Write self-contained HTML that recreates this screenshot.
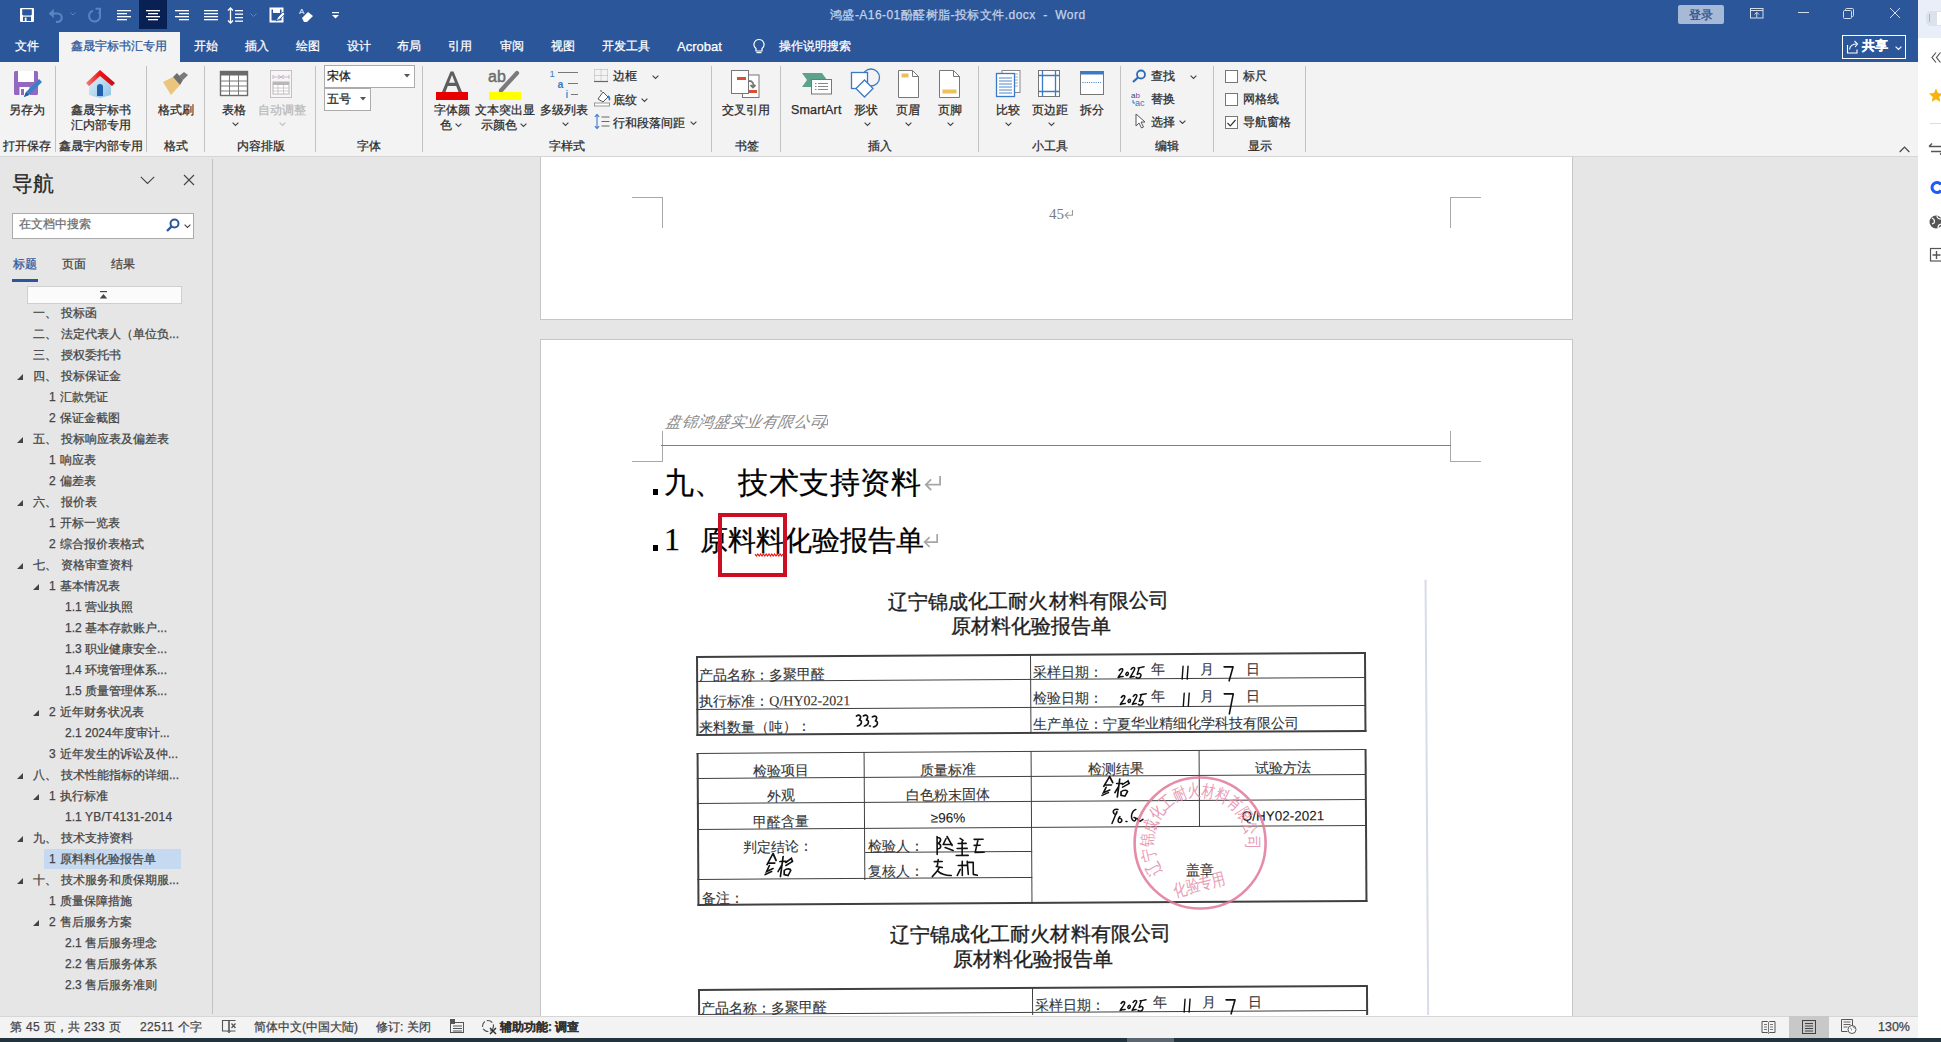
<!DOCTYPE html><html><head><meta charset="utf-8"><style>
html,body{margin:0;padding:0}
body{width:1941px;height:1042px;position:relative;overflow:hidden;background:#E6E6E6;font-family:"Liberation Sans",sans-serif}
.t{position:absolute;white-space:nowrap;-webkit-font-smoothing:antialiased;-webkit-text-stroke:0.25px currentColor}
svg{overflow:visible}
</style></head><body>
<div style="position:absolute;left:0px;top:0px;width:1918px;height:62px;background:#2B579A"></div>
<div style="position:absolute;left:1918px;top:0px;width:23px;height:1042px;background:#FFFFFF"></div>
<div style="position:absolute;left:1918px;top:0px;width:23px;height:38px;background:#E9EEF8"></div>
<svg style="position:absolute;left:19px;top:7px;" width="16" height="16" viewBox="0 0 16 16"><rect x="1" y="1" width="14" height="14" rx="1" fill="#fff"/><path d="M3.2 2.2h9.6v5.3l-1 1H4.2l-1-1z" fill="#2B579A"/><rect x="4" y="9.7" width="8" height="4.3" fill="#2B579A"/><rect x="5.8" y="10.6" width="1.7" height="3.4" fill="#fff"/></svg>
<svg style="position:absolute;left:48px;top:7px;" width="16" height="15" viewBox="0 0 16 15"><path d="M5 6.5h4.5a4.2 4.2 0 0 1 0 8.4H8" fill="none" stroke="#5A84C2" stroke-width="2.2"/><path d="M0.7 6.5L5.8 1.8v9.4z" fill="#5A84C2"/></svg>
<svg style="position:absolute;left:70px;top:12px;" width="6" height="4" viewBox="0 0 6 4"><path d="M0.5 0.5l2.5 2.5 2.5-2.5" fill="none" stroke="#5A84C2" stroke-width="1"/></svg>
<svg style="position:absolute;left:87px;top:7px;" width="15" height="15" viewBox="0 0 15 15"><path d="M6 3.6A5.6 5.6 0 1 0 11.8 5.2" fill="none" stroke="#5A84C2" stroke-width="2"/><path d="M8.5 1.8h4.5v4.6" fill="none" stroke="#5A84C2" stroke-width="2"/></svg>
<svg style="position:absolute;left:117px;top:10px;" width="15" height="12" viewBox="0 0 15 12"><rect x="0" y="0" width="14" height="1.3" fill="#fff"/><rect x="0" y="3" width="10" height="1.3" fill="#fff"/><rect x="0" y="6" width="14" height="1.3" fill="#fff"/><rect x="0" y="9" width="10" height="1.3" fill="#fff"/></svg>
<div style="position:absolute;left:139px;top:0px;width:28px;height:29px;background:#082052"></div>
<svg style="position:absolute;left:146px;top:10px;" width="15" height="12" viewBox="0 0 15 12"><rect x="0" y="0" width="14" height="1.3" fill="#fff"/><rect x="2" y="3" width="10" height="1.3" fill="#fff"/><rect x="0" y="6" width="14" height="1.3" fill="#fff"/><rect x="2" y="9" width="10" height="1.3" fill="#fff"/></svg>
<svg style="position:absolute;left:175px;top:10px;" width="15" height="12" viewBox="0 0 15 12"><rect x="0" y="0" width="14" height="1.3" fill="#fff"/><rect x="4" y="3" width="10" height="1.3" fill="#fff"/><rect x="0" y="6" width="14" height="1.3" fill="#fff"/><rect x="4" y="9" width="10" height="1.3" fill="#fff"/></svg>
<svg style="position:absolute;left:204px;top:10px;" width="15" height="12" viewBox="0 0 15 12"><rect x="0" y="0" width="14" height="1.3" fill="#fff"/><rect x="0" y="3" width="14" height="1.3" fill="#fff"/><rect x="0" y="6" width="14" height="1.3" fill="#fff"/><rect x="0" y="9" width="14" height="1.3" fill="#fff"/></svg>
<svg style="position:absolute;left:228px;top:7px;" width="16" height="17" viewBox="0 0 16 17"><path d="M2.5 1v15" stroke="#fff" stroke-width="1.3"/><path d="M0 3.5L2.5 1 5 3.5M0 13.5L2.5 16 5 13.5" fill="none" stroke="#fff" stroke-width="1.3"/><rect x="7" y="3" width="8" height="1.3" fill="#fff"/><rect x="7" y="6.5" width="8" height="1.3" fill="#fff"/><rect x="7" y="10" width="8" height="1.3" fill="#fff"/><rect x="7" y="13.5" width="8" height="1.3" fill="#fff"/></svg>
<svg style="position:absolute;left:250px;top:13px;" width="7" height="4" viewBox="0 0 7 4"><path d="M0.5 0.5l3 3 3-3" fill="none" stroke="#5A84C2" stroke-width="1"/></svg>
<svg style="position:absolute;left:269px;top:7px;" width="17" height="16" viewBox="0 0 17 16"><path d="M1.5 1.5h12v13h-12z" fill="none" stroke="#fff" stroke-width="2"/><path d="M4 1.5h7v4.5H4z" fill="#fff"/><path d="M7 14l2-4 5-5 2 2-5 5z" fill="#fff" stroke="#2B579A" stroke-width="0.8"/></svg>
<svg style="position:absolute;left:299px;top:6px;" width="16" height="17" viewBox="0 0 16 17"><text x="0" y="8" font-size="8" fill="#fff" font-family="Liberation Sans">A</text><path d="M3 12l6-6 5 4-6 6h-3z" fill="#fff"/></svg>
<svg style="position:absolute;left:332px;top:12px;" width="7" height="7" viewBox="0 0 7 7"><rect x="0" y="0" width="7" height="1.2" fill="#fff"/><path d="M0 3h7l-3.5 3.5z" fill="#fff"/></svg>
<div class="t" style="left:830px;top:9px;font-size:12px;line-height:12px;color:#C5D2E6;letter-spacing:0.45px">鸿盛-A16-01酚醛树脂-投标文件.docx&nbsp; -&nbsp; Word</div>
<div style="position:absolute;left:1678px;top:5px;width:46px;height:19px;background:#A6BAD7;border-radius:2px"></div>
<div class="t" style="left:1689px;top:9px;font-size:12px;line-height:12px;color:#2C4F88;">登录</div>
<svg style="position:absolute;left:1750px;top:8px;" width="14" height="11" viewBox="0 0 14 11"><rect x="0.5" y="0.5" width="12.5" height="9.5" fill="none" stroke="#D3DCEB" stroke-width="1"/><path d="M0.5 2.5h12.5" stroke="#D3DCEB"/><path d="M6.75 9.5V4.5M4.5 6.5l2.25-2.25L9 6.5" fill="none" stroke="#D3DCEB" stroke-width="1"/></svg>
<div style="position:absolute;left:1798px;top:12px;width:11px;height:1px;background:#D3DCEB"></div>
<svg style="position:absolute;left:1843px;top:8px;" width="11" height="11" viewBox="0 0 11 11"><rect x="0.5" y="2.5" width="8" height="8" rx="1" fill="none" stroke="#D3DCEB"/><path d="M2.5 2.5v-1a1 1 0 0 1 1-1h6a1 1 0 0 1 1 1v6a1 1 0 0 1-1 1h-1" fill="none" stroke="#D3DCEB"/></svg>
<svg style="position:absolute;left:1889px;top:7px;" width="12" height="12" viewBox="0 0 12 12"><path d="M1 1l10 10M11 1L1 11" stroke="#D3DCEB" stroke-width="1"/></svg>
<div style="position:absolute;left:59px;top:32px;width:121px;height:30px;background:#F3F3F3"></div>
<div class="t" style="left:15px;top:40px;font-size:12px;line-height:12px;color:#fff;">文件</div>
<div class="t" style="left:194px;top:40px;font-size:12px;line-height:12px;color:#fff;">开始</div>
<div class="t" style="left:245px;top:40px;font-size:12px;line-height:12px;color:#fff;">插入</div>
<div class="t" style="left:296px;top:40px;font-size:12px;line-height:12px;color:#fff;">绘图</div>
<div class="t" style="left:347px;top:40px;font-size:12px;line-height:12px;color:#fff;">设计</div>
<div class="t" style="left:397px;top:40px;font-size:12px;line-height:12px;color:#fff;">布局</div>
<div class="t" style="left:448px;top:40px;font-size:12px;line-height:12px;color:#fff;">引用</div>
<div class="t" style="left:500px;top:40px;font-size:12px;line-height:12px;color:#fff;">审阅</div>
<div class="t" style="left:551px;top:40px;font-size:12px;line-height:12px;color:#fff;">视图</div>
<div class="t" style="left:602px;top:40px;font-size:12px;line-height:12px;color:#fff;">开发工具</div>
<div class="t" style="left:71px;top:40px;font-size:12px;line-height:12px;color:#2B579A;">鑫晟宇标书汇专用</div>
<div class="t" style="left:677px;top:40px;font-size:13px;line-height:13px;color:#fff;">Acrobat</div>
<svg style="position:absolute;left:752px;top:38px;" width="14" height="17" viewBox="0 0 14 17"><path d="M7 1.5a5 5 0 0 0-3 9v2.5h6v-2.5a5 5 0 0 0-3-9z" fill="none" stroke="#fff" stroke-width="1.2"/><rect x="4.5" y="14" width="5" height="1.2" fill="#fff"/></svg>
<div class="t" style="left:779px;top:40px;font-size:12px;line-height:12px;color:#fff;">操作说明搜索</div>
<div style="position:absolute;left:1842px;top:35px;width:62px;height:22px;border:1px solid #fff"></div>
<svg style="position:absolute;left:1846px;top:40px;" width="14" height="14" viewBox="0 0 14 14"><path d="M1.5 5v8h9.5v-3.5" fill="none" stroke="#fff" stroke-width="1.1"/><path d="M3.5 9.5c0.5-3 3-5.5 7-5.5" fill="none" stroke="#fff" stroke-width="1.1"/><path d="M8.5 1L11.5 4 9 7" fill="none" stroke="#fff" stroke-width="1.1"/></svg>
<div class="t" style="left:1862px;top:39px;font-size:13px;line-height:13px;color:#fff;font-weight:bold">共享</div>
<svg style="position:absolute;left:1895px;top:46px;" width="7" height="4" viewBox="0 0 7 4"><path d="M0.6 0.6l2.9 2.9 2.9-2.9" fill="none" stroke="#fff" stroke-width="1.2"/></svg>
<div style="position:absolute;left:1926px;top:11px;width:15px;height:15px;background:#DCE2EC;border-radius:5px 0 0 5px"></div>
<div style="position:absolute;left:1937px;top:12px;width:4px;height:13px;background:#fff"></div>
<div style="position:absolute;left:1929px;top:14px;width:1px;height:8px;background:#B0B6C0"></div>
<svg style="position:absolute;left:1931px;top:52px;" width="10" height="11" viewBox="0 0 10 11"><path d="M5 0.5L1 5.5 5 10.5M9.5 0.5L5.5 5.5 9.5 10.5" fill="none" stroke="#555" stroke-width="1.2"/></svg>
<svg style="position:absolute;left:1929px;top:88px;" width="14" height="15" viewBox="0 0 14 15"><path d="M7 0.5l2 4.6 5 .5-3.8 3.3 1.1 5-4.3-2.6-4.3 2.6 1.1-5L0 5.6l5-.5z" fill="#F6B40E"/></svg>
<div style="position:absolute;left:1930px;top:123px;width:11px;height:1px;background:#DDD"></div>
<svg style="position:absolute;left:1929px;top:143px;" width="14" height="12" viewBox="0 0 14 12"><path d="M0 3.5h12M0 3.5l3-3M2 8.5h12M14 8.5l-3 3" fill="none" stroke="#555" stroke-width="1.4"/></svg>
<svg style="position:absolute;left:1930px;top:181px;" width="12" height="13" viewBox="0 0 12 13"><path d="M11 3.5A5 5 0 1 0 11 9.5" fill="none" stroke="#1A5CFF" stroke-width="3"/></svg>
<svg style="position:absolute;left:1929px;top:215px;" width="14" height="14" viewBox="0 0 14 14"><circle cx="7" cy="7" r="6.5" fill="#555"/><path d="M3 3c2 1 3 3 2 5l-2 1M8 1c0 2 2 3 4 3M9 13c0-2 1-4 4-4" fill="none" stroke="#fff" stroke-width="1.2"/></svg>
<svg style="position:absolute;left:1930px;top:248px;" width="12" height="14" viewBox="0 0 12 14"><rect x="0.5" y="0.5" width="12" height="12.5" fill="none" stroke="#555" stroke-width="1.2"/><path d="M6.5 3v8M2.5 7h8" stroke="#555" stroke-width="1.4"/></svg>
<div style="position:absolute;left:0px;top:62px;width:1918px;height:94px;background:#F3F3F3"></div>
<div style="position:absolute;left:0px;top:156px;width:1918px;height:1px;background:#D5D5D5"></div>
<div style="position:absolute;left:55px;top:66px;width:1px;height:86px;background:#C2C2C2"></div>
<div style="position:absolute;left:146px;top:66px;width:1px;height:86px;background:#C2C2C2"></div>
<div style="position:absolute;left:204px;top:66px;width:1px;height:86px;background:#C2C2C2"></div>
<div style="position:absolute;left:315px;top:66px;width:1px;height:86px;background:#C2C2C2"></div>
<div style="position:absolute;left:422px;top:66px;width:1px;height:86px;background:#C2C2C2"></div>
<div style="position:absolute;left:711px;top:66px;width:1px;height:86px;background:#C2C2C2"></div>
<div style="position:absolute;left:780px;top:66px;width:1px;height:86px;background:#C2C2C2"></div>
<div style="position:absolute;left:978px;top:66px;width:1px;height:86px;background:#C2C2C2"></div>
<div style="position:absolute;left:1120px;top:66px;width:1px;height:86px;background:#C2C2C2"></div>
<div style="position:absolute;left:1213px;top:66px;width:1px;height:86px;background:#C2C2C2"></div>
<div style="position:absolute;left:1305px;top:66px;width:1px;height:86px;background:#C2C2C2"></div>
<div class="t" style="left:3px;top:140px;font-size:12px;line-height:12px;color:#2A2A2A;">打开保存</div>
<div class="t" style="left:59px;top:140px;font-size:12px;line-height:12px;color:#2A2A2A;">鑫晟宇内部专用</div>
<div class="t" style="left:164px;top:140px;font-size:12px;line-height:12px;color:#2A2A2A;">格式</div>
<div class="t" style="left:237px;top:140px;font-size:12px;line-height:12px;color:#2A2A2A;">内容排版</div>
<div class="t" style="left:357px;top:140px;font-size:12px;line-height:12px;color:#2A2A2A;">字体</div>
<div class="t" style="left:549px;top:140px;font-size:12px;line-height:12px;color:#2A2A2A;">字样式</div>
<div class="t" style="left:735px;top:140px;font-size:12px;line-height:12px;color:#2A2A2A;">书签</div>
<div class="t" style="left:868px;top:140px;font-size:12px;line-height:12px;color:#2A2A2A;">插入</div>
<div class="t" style="left:1032px;top:140px;font-size:12px;line-height:12px;color:#2A2A2A;">小工具</div>
<div class="t" style="left:1155px;top:140px;font-size:12px;line-height:12px;color:#2A2A2A;">编辑</div>
<div class="t" style="left:1248px;top:140px;font-size:12px;line-height:12px;color:#2A2A2A;">显示</div>
<div class="t" style="left:9px;top:104px;font-size:12px;line-height:12px;color:#2A2A2A;">另存为</div>
<div class="t" style="left:71px;top:104px;font-size:12px;line-height:12px;color:#2A2A2A;">鑫晟宇标书</div>
<div class="t" style="left:71px;top:119px;font-size:12px;line-height:12px;color:#2A2A2A;">汇内部专用</div>
<div class="t" style="left:158px;top:104px;font-size:12px;line-height:12px;color:#2A2A2A;">格式刷</div>
<div class="t" style="left:222px;top:104px;font-size:12px;line-height:12px;color:#2A2A2A;">表格</div>
<svg style="position:absolute;left:232px;top:122px;" width="7" height="4" viewBox="0 0 7 4"><path d="M0.6 0.6l2.9 2.9 2.9-2.9" fill="none" stroke="#444" stroke-width="1.1"/></svg>
<div class="t" style="left:258px;top:104px;font-size:12px;line-height:12px;color:#B9B9B9;">自动调整</div>
<svg style="position:absolute;left:279px;top:122px;" width="7" height="4" viewBox="0 0 7 4"><path d="M0.6 0.6l2.9 2.9 2.9-2.9" fill="none" stroke="#C0C0C0" stroke-width="1.1"/></svg>
<div class="t" style="left:434px;top:104px;font-size:12px;line-height:12px;color:#2A2A2A;">字体颜</div>
<div class="t" style="left:440px;top:119px;font-size:12px;line-height:12px;color:#2A2A2A;">色</div>
<svg style="position:absolute;left:455px;top:123px;" width="7" height="4" viewBox="0 0 7 4"><path d="M0.6 0.6l2.9 2.9 2.9-2.9" fill="none" stroke="#444" stroke-width="1.1"/></svg>
<div class="t" style="left:475px;top:104px;font-size:12px;line-height:12px;color:#2A2A2A;">文本突出显</div>
<div class="t" style="left:481px;top:119px;font-size:12px;line-height:12px;color:#2A2A2A;">示颜色</div>
<svg style="position:absolute;left:520px;top:123px;" width="7" height="4" viewBox="0 0 7 4"><path d="M0.6 0.6l2.9 2.9 2.9-2.9" fill="none" stroke="#444" stroke-width="1.1"/></svg>
<div class="t" style="left:540px;top:104px;font-size:12px;line-height:12px;color:#2A2A2A;">多级列表</div>
<svg style="position:absolute;left:562px;top:122px;" width="7" height="4" viewBox="0 0 7 4"><path d="M0.6 0.6l2.9 2.9 2.9-2.9" fill="none" stroke="#444" stroke-width="1.1"/></svg>
<div class="t" style="left:722px;top:104px;font-size:12px;line-height:12px;color:#2A2A2A;">交叉引用</div>
<div class="t" style="left:791px;top:104px;font-size:12.5px;line-height:12.5px;color:#2A2A2A;letter-spacing:0.15px">SmartArt</div>
<div class="t" style="left:854px;top:104px;font-size:12px;line-height:12px;color:#2A2A2A;">形状</div>
<svg style="position:absolute;left:864px;top:122px;" width="7" height="4" viewBox="0 0 7 4"><path d="M0.6 0.6l2.9 2.9 2.9-2.9" fill="none" stroke="#444" stroke-width="1.1"/></svg>
<div class="t" style="left:896px;top:104px;font-size:12px;line-height:12px;color:#2A2A2A;">页眉</div>
<svg style="position:absolute;left:905px;top:122px;" width="7" height="4" viewBox="0 0 7 4"><path d="M0.6 0.6l2.9 2.9 2.9-2.9" fill="none" stroke="#444" stroke-width="1.1"/></svg>
<div class="t" style="left:938px;top:104px;font-size:12px;line-height:12px;color:#2A2A2A;">页脚</div>
<svg style="position:absolute;left:947px;top:122px;" width="7" height="4" viewBox="0 0 7 4"><path d="M0.6 0.6l2.9 2.9 2.9-2.9" fill="none" stroke="#444" stroke-width="1.1"/></svg>
<div class="t" style="left:996px;top:104px;font-size:12px;line-height:12px;color:#2A2A2A;">比较</div>
<svg style="position:absolute;left:1005px;top:122px;" width="7" height="4" viewBox="0 0 7 4"><path d="M0.6 0.6l2.9 2.9 2.9-2.9" fill="none" stroke="#444" stroke-width="1.1"/></svg>
<div class="t" style="left:1032px;top:104px;font-size:12px;line-height:12px;color:#2A2A2A;">页边距</div>
<svg style="position:absolute;left:1048px;top:122px;" width="7" height="4" viewBox="0 0 7 4"><path d="M0.6 0.6l2.9 2.9 2.9-2.9" fill="none" stroke="#444" stroke-width="1.1"/></svg>
<div class="t" style="left:1080px;top:104px;font-size:12px;line-height:12px;color:#2A2A2A;">拆分</div>
<div class="t" style="left:613px;top:70px;font-size:12px;line-height:12px;color:#2A2A2A;">边框</div>
<svg style="position:absolute;left:652px;top:75px;" width="7" height="4" viewBox="0 0 7 4"><path d="M0.6 0.6l2.9 2.9 2.9-2.9" fill="none" stroke="#444" stroke-width="1.1"/></svg>
<div class="t" style="left:613px;top:94px;font-size:12px;line-height:12px;color:#2A2A2A;">底纹</div>
<svg style="position:absolute;left:641px;top:98px;" width="7" height="4" viewBox="0 0 7 4"><path d="M0.6 0.6l2.9 2.9 2.9-2.9" fill="none" stroke="#444" stroke-width="1.1"/></svg>
<div class="t" style="left:613px;top:117px;font-size:12px;line-height:12px;color:#2A2A2A;">行和段落间距</div>
<svg style="position:absolute;left:690px;top:121px;" width="7" height="4" viewBox="0 0 7 4"><path d="M0.6 0.6l2.9 2.9 2.9-2.9" fill="none" stroke="#444" stroke-width="1.1"/></svg>
<div class="t" style="left:1151px;top:70px;font-size:12px;line-height:12px;color:#2A2A2A;">查找</div>
<svg style="position:absolute;left:1190px;top:75px;" width="7" height="4" viewBox="0 0 7 4"><path d="M0.6 0.6l2.9 2.9 2.9-2.9" fill="none" stroke="#444" stroke-width="1.1"/></svg>
<div class="t" style="left:1151px;top:93px;font-size:12px;line-height:12px;color:#2A2A2A;">替换</div>
<div class="t" style="left:1151px;top:116px;font-size:12px;line-height:12px;color:#2A2A2A;">选择</div>
<svg style="position:absolute;left:1179px;top:120px;" width="7" height="4" viewBox="0 0 7 4"><path d="M0.6 0.6l2.9 2.9 2.9-2.9" fill="none" stroke="#444" stroke-width="1.1"/></svg>
<div style="position:absolute;left:1225px;top:70px;width:11px;height:11px;border:1px solid #767676;background:#fff"></div>
<div style="position:absolute;left:1225px;top:93px;width:11px;height:11px;border:1px solid #767676;background:#fff"></div>
<div style="position:absolute;left:1225px;top:116px;width:11px;height:11px;border:1px solid #767676;background:#fff"></div>
<svg style="position:absolute;left:1227px;top:119px;" width="9" height="8" viewBox="0 0 9 8"><path d="M0.5 4l2.8 2.8L8.5 1" fill="none" stroke="#333" stroke-width="1.2"/></svg>
<div class="t" style="left:1243px;top:70px;font-size:12px;line-height:12px;color:#2A2A2A;">标尺</div>
<div class="t" style="left:1243px;top:93px;font-size:12px;line-height:12px;color:#2A2A2A;">网格线</div>
<div class="t" style="left:1243px;top:116px;font-size:12px;line-height:12px;color:#2A2A2A;">导航窗格</div>
<div style="position:absolute;left:324px;top:65px;width:89px;height:21px;border:1px solid #ABABAB;background:#fff"></div>
<div class="t" style="left:327px;top:70px;font-size:12px;line-height:12px;color:#222;">宋体</div>
<svg style="position:absolute;left:404px;top:74px;" width="7" height="4" viewBox="0 0 7 4"><path d="M0 0h6l-3 3.5z" fill="#555"/></svg>
<div style="position:absolute;left:324px;top:88px;width:45px;height:21px;border:1px solid #ABABAB;background:#fff"></div>
<div class="t" style="left:327px;top:93px;font-size:12px;line-height:12px;color:#222;">五号</div>
<svg style="position:absolute;left:360px;top:97px;" width="7" height="4" viewBox="0 0 7 4"><path d="M0 0h6l-3 3.5z" fill="#555"/></svg>
<svg style="position:absolute;left:1899px;top:146px;" width="11" height="7" viewBox="0 0 11 7"><path d="M0.7 6L5.5 1.2 10.3 6" fill="none" stroke="#444" stroke-width="1.2"/></svg>
<svg style="position:absolute;left:13px;top:70px;" width="31" height="29" viewBox="0 0 31 29"><rect x="1" y="1" width="24" height="24" rx="1.5" fill="#9468C0"/><rect x="5" y="1" width="16" height="11" fill="#fff"/><rect x="6.5" y="17" width="10" height="8" fill="#fff"/><rect x="8" y="19" width="3" height="6" fill="#9468C0"/><path d="M11 27l2-5 13-13 3 3-13 13z" fill="#3C7FC4"/><path d="M11 27l2-5 3 3z" fill="#2B5E9A"/></svg>
<svg style="position:absolute;left:85px;top:69px;" width="31" height="29" viewBox="0 0 31 29"><defs><linearGradient id="hw" x1="0" y1="0" x2="1" y2="1"><stop offset="0" stop-color="#E4F1FA"/><stop offset="1" stop-color="#8FC3E6"/></linearGradient><linearGradient id="hr" x1="0" y1="0" x2="1" y2="0"><stop offset="0" stop-color="#F57C7C"/><stop offset=".5" stop-color="#F01010"/><stop offset="1" stop-color="#C0101A"/></linearGradient></defs><path d="M4 14l11-9 11 9v12l-11 3-11-3z" fill="url(#hw)"/><path d="M1 14L15 1l15 13-3 3L15 7 4 17z" fill="url(#hr)"/><path d="M12 27v-9a3 3 0 0 1 6 0v9z" fill="#1F5FAF"/></svg>
<svg style="position:absolute;left:162px;top:72px;" width="27" height="24" viewBox="0 0 27 24"><path d="M1 10l10-5 7 8-9 10z" fill="#EBC57C"/><path d="M11 5l4-4 6 7-3 5z" fill="#6E6E6E"/><path d="M17 4l5-4 4 3-5 5z" fill="#7A7A7A"/></svg>
<svg style="position:absolute;left:219px;top:70px;" width="30" height="27" viewBox="0 0 30 27"><rect x="1.5" y="1.5" width="27" height="24" fill="#fff" stroke="#6A6A6A" stroke-width="1.4"/><rect x="1.5" y="1.5" width="27" height="4" fill="#6A6A6A"/><path d="M1.5 11h27M1.5 16h27M1.5 21h27M10.5 5v20.5M19.5 5v20.5" stroke="#7A7A7A" stroke-width="1"/></svg>
<svg style="position:absolute;left:270px;top:70px;" width="23" height="28" viewBox="0 0 23 28"><rect x="0.5" y="0.5" width="21" height="27" fill="#F8F4F8" stroke="#C6C0C6"/><path d="M3 7h16M3 5v4M19 5v4M8 5l6 4M14 5l-6 4" stroke="#C0BCC0" stroke-width="1"/><rect x="3" y="12" width="16" height="12" fill="#fff" stroke="#B8B8B8"/><rect x="3" y="12" width="16" height="3" fill="#B8B8B8"/><path d="M3 18h16M3 21h16M8 15v9M13.5 15v9" stroke="#C0C0C0" stroke-width=".8"/></svg>
<svg style="position:absolute;left:435px;top:70px;" width="34" height="31" viewBox="0 0 34 31"><path d="M7 22L15.5 1.5h3L27 22h-3.5l-2.3-6h-8.4l-2.3 6z M14 12.8h6L17 5z" fill="#5E5E5E" fill-rule="evenodd"/><rect x="1" y="22" width="32" height="8" fill="#E80000"/></svg>
<svg style="position:absolute;left:488px;top:67px;" width="34" height="34" viewBox="0 0 34 34"><text x="0" y="14.5" font-size="16" font-family="Liberation Sans" fill="#6A6A6A" stroke="#6A6A6A" stroke-width="0.4">ab</text><path d="M13 23.5L29 6" stroke="#7A7A7A" stroke-width="4.2" stroke-linecap="round"/><path d="M11.5 25l2.5-3" stroke="#7A7A7A" stroke-width="2"/><rect x="1" y="25" width="32" height="8" fill="#FFFF00"/></svg>
<svg style="position:absolute;left:549px;top:68px;" width="30" height="31" viewBox="0 0 30 31"><text x="0.5" y="8.5" font-size="9.5" font-family="Liberation Sans" fill="#3A7BC8">1</text><path d="M9 4.5h20" stroke="#777" stroke-width="1"/><text x="8.5" y="19.5" font-size="10.5" font-family="Liberation Sans" font-weight="bold" fill="#3A7BC8">a</text><path d="M19 15.5h10" stroke="#777" stroke-width="1"/><path d="M18 24v6M18 22v1" stroke="#3A7BC8" stroke-width="1.2"/><path d="M22 26.5h7" stroke="#777" stroke-width="1"/></svg>
<svg style="position:absolute;left:594px;top:69px;" width="14" height="14" viewBox="0 0 14 14"><path d="M0.5 0.5h13M0.5 6.5h13M0.5 0.5v12M7 0.5v12M13.5 0.5v12" fill="none" stroke="#B0B0B0" stroke-width="1" stroke-dasharray="1 1"/><path d="M0 12.5h14" stroke="#666" stroke-width="1.2"/></svg>
<svg style="position:absolute;left:594px;top:90px;" width="17" height="17" viewBox="0 0 17 17"><path d="M4 9l5-7 5 5-5 5z" fill="#fff" stroke="#555" stroke-width="1"/><path d="M7 2V0" stroke="#555"/><path d="M14 6c1.5 1.5 2 3 1 4" fill="none" stroke="#3A7BC8" stroke-width="1.8"/><rect x="0.5" y="13" width="15" height="3" fill="#fff" stroke="#999"/></svg>
<svg style="position:absolute;left:594px;top:113px;" width="16" height="17" viewBox="0 0 16 17"><path d="M3 1.5v14" stroke="#3A7BC8" stroke-width="1.1"/><path d="M0.8 3.8L3 1.5 5.2 3.8M0.8 13.2L3 15.5 5.2 13.2" fill="none" stroke="#3A7BC8" stroke-width="1.1"/><path d="M7.5 4h8M7.5 8.5h8M7.5 13h8" stroke="#666" stroke-width="1"/></svg>
<svg style="position:absolute;left:730px;top:69px;" width="31" height="30" viewBox="0 0 31 30"><rect x="1.5" y="1.5" width="17" height="23" fill="#fff" stroke="#777"/><rect x="12.5" y="6" width="16.5" height="22.5" fill="#fff" stroke="#777"/><rect x="1.5" y="1.5" width="17" height="23" fill="#fff" stroke="#777"/><rect x="7" y="8" width="9" height="3" fill="#D9502E"/><rect x="19" y="21" width="8" height="3" fill="#D9502E"/><path d="M19 12c4 0 5 3 4 6M20.5 16l2.5 2.5 2.5-2.5" fill="none" stroke="#777" stroke-width="1.8"/></svg>
<svg style="position:absolute;left:802px;top:71px;" width="31" height="25" viewBox="0 0 31 25"><path d="M0 2h20l5 7-5 7H0l5-7z" fill="#5DA28A"/><rect x="9.5" y="8.5" width="20" height="14.5" fill="#fff" stroke="#777"/><path d="M13 12.5h1.5M16 12.5h10M13 15.5h1.5M16 15.5h10M13 18.5h1.5M16 18.5h10" stroke="#888" stroke-width="1"/></svg>
<svg style="position:absolute;left:850px;top:68px;" width="31" height="32" viewBox="0 0 31 32"><circle cx="21" cy="9.5" r="8.5" fill="none" stroke="#3A7BC8" stroke-width="1.3"/><rect x="1.5" y="4.5" width="16" height="16" fill="#fff" stroke="#3A7BC8" stroke-width="1.3"/><path d="M14.5 12l8.5 8.5-8.5 8.5-8.5-8.5z" fill="#fff" stroke="#3A7BC8" stroke-width="1.3"/></svg>
<svg style="position:absolute;left:897px;top:69px;" width="23" height="30" viewBox="0 0 23 30"><path d="M1.5 1.5h14l6 6v21h-20z" fill="#fff" stroke="#777"/><path d="M15.5 1.5v6h6" fill="none" stroke="#777"/><rect x="4.5" y="4.5" width="7" height="4" fill="#EDC05D"/></svg>
<svg style="position:absolute;left:938px;top:69px;" width="23" height="30" viewBox="0 0 23 30"><path d="M1.5 1.5h14l6 6v21h-20z" fill="#fff" stroke="#777"/><path d="M15.5 1.5v6h6" fill="none" stroke="#777"/><rect x="4.5" y="20.5" width="14" height="4" fill="#EDC05D"/></svg>
<svg style="position:absolute;left:995px;top:69px;" width="27" height="30" viewBox="0 0 27 30"><rect x="7" y="1.5" width="18" height="22" fill="#fff" stroke="#888"/><path d="M18 5h5M18 8h5M18 11h5M18 14h5M18 17h5" stroke="#999" stroke-width=".8"/><rect x="1.5" y="4.5" width="18" height="23" fill="#fff" stroke="#3A7BC8" stroke-width="1.3"/><path d="M4 9h13M4 12h13M4 15h13M4 18h13M4 21h13M4 24h13" stroke="#3A7BC8" stroke-width=".9"/></svg>
<svg style="position:absolute;left:1037px;top:69px;" width="25" height="30" viewBox="0 0 25 30"><rect x="1.5" y="1.5" width="21" height="26" fill="#fff" stroke="#777"/><path d="M5.5 1.5v26M18.5 1.5v26M1.5 6.5h21M1.5 22.5h21" stroke="#3A7BC8" stroke-width="1.3"/></svg>
<svg style="position:absolute;left:1079px;top:69px;" width="26" height="28" viewBox="0 0 26 28"><rect x="1.5" y="2.5" width="23" height="23" fill="#fff" stroke="#777"/><rect x="1.5" y="2" width="23" height="3.5" fill="#3A7BC8"/><path d="M3.5 13.5h19" stroke="#3A7BC8" stroke-width="1" stroke-dasharray="1 1.2"/></svg>
<svg style="position:absolute;left:1132px;top:69px;" width="15" height="14" viewBox="0 0 15 14"><circle cx="9" cy="5.5" r="4" fill="none" stroke="#2B6CB8" stroke-width="1.8"/><path d="M6 8.5L1 13" stroke="#2B6CB8" stroke-width="2.2"/></svg>
<svg style="position:absolute;left:1131px;top:91px;" width="18" height="16" viewBox="0 0 18 16"><text x="0" y="7" font-size="8" font-family="Liberation Sans" fill="#444">a</text><text x="4.5" y="7" font-size="8" font-family="Liberation Sans" fill="#7D3FA8">b</text><text x="4" y="15" font-size="9" font-family="Liberation Sans" fill="#2E75C4">ac</text><path d="M2 9v3h2" fill="none" stroke="#2E75C4" stroke-width="1"/></svg>
<svg style="position:absolute;left:1135px;top:113px;" width="11" height="16" viewBox="0 0 11 16"><path d="M1 1v12l3-3 2.5 5 2-1-2.5-5h4z" fill="#fff" stroke="#555" stroke-width="1"/></svg>
<div style="position:absolute;left:0px;top:157px;width:212px;height:859px;background:#E6E6E6"></div>
<div style="position:absolute;left:212px;top:159px;width:1px;height:855px;background:#C2C2C2"></div>
<div class="t" style="left:12px;top:173px;font-size:21px;line-height:21px;color:#262626;">导航</div>
<svg style="position:absolute;left:140px;top:176px;" width="15" height="9" viewBox="0 0 15 9"><path d="M0.8 0.8l6.7 6.7 6.7-6.7" fill="none" stroke="#444" stroke-width="1.1"/></svg>
<svg style="position:absolute;left:183px;top:174px;" width="12" height="12" viewBox="0 0 12 12"><path d="M1 1l10 10M11 1L1 11" stroke="#444" stroke-width="1.1"/></svg>
<div style="position:absolute;left:12px;top:213px;width:180px;height:24px;background:#fff;border:1px solid #ABABAB"></div>
<div class="t" style="left:19px;top:218px;font-size:12px;line-height:12px;color:#6E6E6E;">在文档中搜索</div>
<svg style="position:absolute;left:166px;top:218px;" width="14" height="14" viewBox="0 0 14 14"><circle cx="8.5" cy="5.5" r="4" fill="none" stroke="#2B579A" stroke-width="2"/><path d="M5.5 8.5L1 13" stroke="#2B579A" stroke-width="2.4"/></svg>
<svg style="position:absolute;left:184px;top:224px;" width="7" height="4" viewBox="0 0 7 4"><path d="M0.6 0.6l2.9 2.9 2.9-2.9" fill="none" stroke="#444" stroke-width="1.1"/></svg>
<div class="t" style="left:13px;top:258px;font-size:12px;line-height:12px;color:#2B579A;">标题</div>
<div class="t" style="left:62px;top:258px;font-size:12px;line-height:12px;color:#444;">页面</div>
<div class="t" style="left:111px;top:258px;font-size:12px;line-height:12px;color:#444;">结果</div>
<div style="position:absolute;left:12px;top:279px;width:26px;height:3px;background:#2B579A"></div>
<div style="position:absolute;left:27px;top:286px;width:153px;height:16px;background:#FBFBFB;border:1px solid #CFCFCF"></div>
<svg style="position:absolute;left:99px;top:291px;" width="9" height="8" viewBox="0 0 9 8"><rect x="1" y="0" width="7" height="1.2" fill="#444"/><path d="M0.8 7.5L4.5 3l3.7 4.5z" fill="#444"/></svg>
<div class="t" style="left:33px;top:307px;font-size:12px;line-height:12px;color:#444;">一、</div>
<div class="t" style="left:61px;top:307px;font-size:12px;line-height:12px;color:#444;">投标函</div>
<div class="t" style="left:33px;top:328px;font-size:12px;line-height:12px;color:#444;">二、</div>
<div class="t" style="left:61px;top:328px;font-size:12px;line-height:12px;color:#444;">法定代表人（单位负...</div>
<div class="t" style="left:33px;top:349px;font-size:12px;line-height:12px;color:#444;">三、</div>
<div class="t" style="left:61px;top:349px;font-size:12px;line-height:12px;color:#444;">授权委托书</div>
<svg style="position:absolute;left:17px;top:374px;" width="6" height="6" viewBox="0 0 6 6"><path d="M6 0v6H0z" fill="#444"/></svg>
<div class="t" style="left:33px;top:370px;font-size:12px;line-height:12px;color:#444;">四、</div>
<div class="t" style="left:61px;top:370px;font-size:12px;line-height:12px;color:#444;">投标保证金</div>
<div class="t" style="left:49px;top:391px;font-size:12px;line-height:12px;color:#444;">1</div>
<div class="t" style="left:60px;top:391px;font-size:12px;line-height:12px;color:#444;">汇款凭证</div>
<div class="t" style="left:49px;top:412px;font-size:12px;line-height:12px;color:#444;">2</div>
<div class="t" style="left:60px;top:412px;font-size:12px;line-height:12px;color:#444;">保证金截图</div>
<svg style="position:absolute;left:17px;top:437px;" width="6" height="6" viewBox="0 0 6 6"><path d="M6 0v6H0z" fill="#444"/></svg>
<div class="t" style="left:33px;top:433px;font-size:12px;line-height:12px;color:#444;">五、</div>
<div class="t" style="left:61px;top:433px;font-size:12px;line-height:12px;color:#444;">投标响应表及偏差表</div>
<div class="t" style="left:49px;top:454px;font-size:12px;line-height:12px;color:#444;">1</div>
<div class="t" style="left:60px;top:454px;font-size:12px;line-height:12px;color:#444;">响应表</div>
<div class="t" style="left:49px;top:475px;font-size:12px;line-height:12px;color:#444;">2</div>
<div class="t" style="left:60px;top:475px;font-size:12px;line-height:12px;color:#444;">偏差表</div>
<svg style="position:absolute;left:17px;top:500px;" width="6" height="6" viewBox="0 0 6 6"><path d="M6 0v6H0z" fill="#444"/></svg>
<div class="t" style="left:33px;top:496px;font-size:12px;line-height:12px;color:#444;">六、</div>
<div class="t" style="left:61px;top:496px;font-size:12px;line-height:12px;color:#444;">报价表</div>
<div class="t" style="left:49px;top:517px;font-size:12px;line-height:12px;color:#444;">1</div>
<div class="t" style="left:60px;top:517px;font-size:12px;line-height:12px;color:#444;">开标一览表</div>
<div class="t" style="left:49px;top:538px;font-size:12px;line-height:12px;color:#444;">2</div>
<div class="t" style="left:60px;top:538px;font-size:12px;line-height:12px;color:#444;">综合报价表格式</div>
<svg style="position:absolute;left:17px;top:563px;" width="6" height="6" viewBox="0 0 6 6"><path d="M6 0v6H0z" fill="#444"/></svg>
<div class="t" style="left:33px;top:559px;font-size:12px;line-height:12px;color:#444;">七、</div>
<div class="t" style="left:61px;top:559px;font-size:12px;line-height:12px;color:#444;">资格审查资料</div>
<svg style="position:absolute;left:33px;top:584px;" width="6" height="6" viewBox="0 0 6 6"><path d="M6 0v6H0z" fill="#444"/></svg>
<div class="t" style="left:49px;top:580px;font-size:12px;line-height:12px;color:#444;">1</div>
<div class="t" style="left:60px;top:580px;font-size:12px;line-height:12px;color:#444;">基本情况表</div>
<div class="t" style="left:65px;top:601px;font-size:12px;line-height:12px;color:#444;">1.1</div>
<div class="t" style="left:85px;top:601px;font-size:12px;line-height:12px;color:#444;">营业执照</div>
<div class="t" style="left:65px;top:622px;font-size:12px;line-height:12px;color:#444;">1.2</div>
<div class="t" style="left:85px;top:622px;font-size:12px;line-height:12px;color:#444;">基本存款账户...</div>
<div class="t" style="left:65px;top:643px;font-size:12px;line-height:12px;color:#444;">1.3</div>
<div class="t" style="left:85px;top:643px;font-size:12px;line-height:12px;color:#444;">职业健康安全...</div>
<div class="t" style="left:65px;top:664px;font-size:12px;line-height:12px;color:#444;">1.4</div>
<div class="t" style="left:85px;top:664px;font-size:12px;line-height:12px;color:#444;">环境管理体系...</div>
<div class="t" style="left:65px;top:685px;font-size:12px;line-height:12px;color:#444;">1.5</div>
<div class="t" style="left:85px;top:685px;font-size:12px;line-height:12px;color:#444;">质量管理体系...</div>
<svg style="position:absolute;left:33px;top:710px;" width="6" height="6" viewBox="0 0 6 6"><path d="M6 0v6H0z" fill="#444"/></svg>
<div class="t" style="left:49px;top:706px;font-size:12px;line-height:12px;color:#444;">2</div>
<div class="t" style="left:60px;top:706px;font-size:12px;line-height:12px;color:#444;">近年财务状况表</div>
<div class="t" style="left:65px;top:727px;font-size:12px;line-height:12px;color:#444;">2.1</div>
<div class="t" style="left:85px;top:727px;font-size:12px;line-height:12px;color:#444;">2024年度审计...</div>
<div class="t" style="left:49px;top:748px;font-size:12px;line-height:12px;color:#444;">3</div>
<div class="t" style="left:60px;top:748px;font-size:12px;line-height:12px;color:#444;">近年发生的诉讼及仲...</div>
<svg style="position:absolute;left:17px;top:773px;" width="6" height="6" viewBox="0 0 6 6"><path d="M6 0v6H0z" fill="#444"/></svg>
<div class="t" style="left:33px;top:769px;font-size:12px;line-height:12px;color:#444;">八、</div>
<div class="t" style="left:61px;top:769px;font-size:12px;line-height:12px;color:#444;">技术性能指标的详细...</div>
<svg style="position:absolute;left:33px;top:794px;" width="6" height="6" viewBox="0 0 6 6"><path d="M6 0v6H0z" fill="#444"/></svg>
<div class="t" style="left:49px;top:790px;font-size:12px;line-height:12px;color:#444;">1</div>
<div class="t" style="left:60px;top:790px;font-size:12px;line-height:12px;color:#444;">执行标准</div>
<div class="t" style="left:65px;top:811px;font-size:12px;line-height:12px;color:#444;">1.1</div>
<div class="t" style="left:85px;top:811px;font-size:12px;line-height:12px;color:#444;letter-spacing:0.25px">YB/T4131-2014</div>
<svg style="position:absolute;left:17px;top:836px;" width="6" height="6" viewBox="0 0 6 6"><path d="M6 0v6H0z" fill="#444"/></svg>
<div class="t" style="left:33px;top:832px;font-size:12px;line-height:12px;color:#444;">九、</div>
<div class="t" style="left:61px;top:832px;font-size:12px;line-height:12px;color:#444;">技术支持资料</div>
<div style="position:absolute;left:44px;top:849px;width:137px;height:20px;background:#C5D9F1"></div>
<div class="t" style="left:49px;top:853px;font-size:12px;line-height:12px;color:#444;">1</div>
<div class="t" style="left:60px;top:853px;font-size:12px;line-height:12px;color:#444;">原料料化验报告单</div>
<svg style="position:absolute;left:17px;top:878px;" width="6" height="6" viewBox="0 0 6 6"><path d="M6 0v6H0z" fill="#444"/></svg>
<div class="t" style="left:33px;top:874px;font-size:12px;line-height:12px;color:#444;">十、</div>
<div class="t" style="left:61px;top:874px;font-size:12px;line-height:12px;color:#444;">技术服务和质保期服...</div>
<div class="t" style="left:49px;top:895px;font-size:12px;line-height:12px;color:#444;">1</div>
<div class="t" style="left:60px;top:895px;font-size:12px;line-height:12px;color:#444;">质量保障措施</div>
<svg style="position:absolute;left:33px;top:920px;" width="6" height="6" viewBox="0 0 6 6"><path d="M6 0v6H0z" fill="#444"/></svg>
<div class="t" style="left:49px;top:916px;font-size:12px;line-height:12px;color:#444;">2</div>
<div class="t" style="left:60px;top:916px;font-size:12px;line-height:12px;color:#444;">售后服务方案</div>
<div class="t" style="left:65px;top:937px;font-size:12px;line-height:12px;color:#444;">2.1</div>
<div class="t" style="left:85px;top:937px;font-size:12px;line-height:12px;color:#444;">售后服务理念</div>
<div class="t" style="left:65px;top:958px;font-size:12px;line-height:12px;color:#444;">2.2</div>
<div class="t" style="left:85px;top:958px;font-size:12px;line-height:12px;color:#444;">售后服务体系</div>
<div class="t" style="left:65px;top:979px;font-size:12px;line-height:12px;color:#444;">2.3</div>
<div class="t" style="left:85px;top:979px;font-size:12px;line-height:12px;color:#444;">售后服务准则</div>
<div style="position:absolute;left:213px;top:157px;width:1705px;height:859px;background:#E6E6E6"></div>
<div style="position:absolute;left:540px;top:157px;width:1033px;height:163px;background:#fff;border-left:1px solid #C6C6C6;border-right:1px solid #C6C6C6;border-bottom:1px solid #C6C6C6;box-sizing:border-box"></div>
<div style="position:absolute;left:632px;top:197px;width:31px;height:1px;background:#A8A8A8"></div>
<div style="position:absolute;left:662px;top:197px;width:1px;height:31px;background:#A8A8A8"></div>
<div style="position:absolute;left:1450px;top:197px;width:31px;height:1px;background:#A8A8A8"></div>
<div style="position:absolute;left:1450px;top:197px;width:1px;height:31px;background:#A8A8A8"></div>
<div class="t" style="left:1049px;top:207px;font-size:15px;line-height:15px;color:#7A7A7A;font-family:&quot;Liberation Serif&quot;,serif;-webkit-text-stroke:0">45</div>
<svg style="position:absolute;left:1064px;top:210px;" width="9" height="8.5" viewBox="0 0 9 8.5"><path d="M8.45 0V5.27H1.1" fill="none" stroke="#999" stroke-width="1.1"/><path d="M4.33 2.0399999999999996L1.1 5.27L4.33 8.5" fill="none" stroke="#999" stroke-width="1.1"/></svg>
<div style="position:absolute;left:540px;top:339px;width:1033px;height:700px;background:#fff;border:1px solid #C6C6C6;box-sizing:border-box"></div>
<div style="position:absolute;left:662px;top:431px;width:1px;height:31px;background:#A8A8A8"></div>
<div style="position:absolute;left:632px;top:461px;width:31px;height:1px;background:#A8A8A8"></div>
<div style="position:absolute;left:1450px;top:431px;width:1px;height:31px;background:#A8A8A8"></div>
<div style="position:absolute;left:1450px;top:461px;width:31px;height:1px;background:#A8A8A8"></div>
<div style="position:absolute;left:661px;top:445px;width:790px;height:1px;background:#7F7F7F"></div>
<div class="t" style="left:664px;top:414px;font-size:15.5px;line-height:15.5px;color:#8A8A8A;font-style:italic;transform:skewX(-12deg);transform-origin:0 100%;-webkit-text-stroke:0">盘锦鸿盛实业有限公司</div>
<svg style="position:absolute;left:820px;top:419px;" width="8" height="9" viewBox="0 0 8 9"><path d="M7.45 0V5.58H1.1" fill="none" stroke="#999" stroke-width="1.1"/><path d="M4.52 2.16L1.1 5.58L4.52 9.0" fill="none" stroke="#999" stroke-width="1.1"/></svg>
<div style="position:absolute;left:653px;top:489px;width:5px;height:6px;background:#000"></div>
<div class="t" style="left:664px;top:468px;font-size:30px;line-height:30px;color:#000;">九、</div>
<div class="t" style="left:738px;top:468px;font-size:30px;line-height:30px;color:#000;letter-spacing:0.6px">技术支持资料</div>
<svg style="position:absolute;left:924px;top:476px;" width="17" height="14" viewBox="0 0 17 14"><path d="M16.1 0V8.68H1.8" fill="none" stroke="#A6A6A6" stroke-width="1.8"/><path d="M7.12 3.3599999999999994L1.8 8.68L7.12 14.0" fill="none" stroke="#A6A6A6" stroke-width="1.8"/></svg>
<div style="position:absolute;left:653px;top:545px;width:5px;height:6px;background:#000"></div>
<div class="t" style="left:664px;top:523px;font-size:32px;line-height:32px;color:#000;font-family:&quot;Liberation Serif&quot;,serif">1</div>
<div class="t" style="left:700px;top:527px;font-size:27.5px;line-height:27.5px;color:#000;">原料料化验报告单</div>
<svg style="position:absolute;left:923px;top:534px;" width="15" height="13" viewBox="0 0 15 13"><path d="M14.15 0V8.06H1.7" fill="none" stroke="#A6A6A6" stroke-width="1.7"/><path d="M6.640000000000001 3.12L1.7 8.06L6.640000000000001 13.0" fill="none" stroke="#A6A6A6" stroke-width="1.7"/></svg>
<div style="position:absolute;left:718px;top:513px;width:69px;height:64px;border:4px solid #CC0E22;box-sizing:border-box"></div>
<svg style="position:absolute;left:755px;top:553px;" width="28" height="4" viewBox="0 0 28 4"><path d="M0 1 l1.4 2 l1.4 -2 l1.4 2 l1.4 -2 l1.4 2 l1.4 -2 l1.4 2 l1.4 -2 l1.4 2 l1.4 -2 l1.4 2 l1.4 -2 l1.4 2 l1.4 -2 l1.4 2 l1.4 -2 l1.4 2 l1.4 -2 l1.4 2 l1.4 -2" fill="none" stroke="#F01010" stroke-width="1.2"/></svg>
<div style="position:absolute;left:0px;top:1016px;width:1918px;height:22px;background:#F3F3F3"></div>
<div style="position:absolute;left:0px;top:1016px;width:1918px;height:1px;background:#D6D6D6"></div>
<div style="position:absolute;left:0px;top:1038px;width:1941px;height:4px;background:#22333D"></div>
<div style="position:absolute;left:1127px;top:1038px;width:47px;height:4px;background:#5B6670"></div>
<div class="t" style="left:10px;top:1021px;font-size:12px;line-height:12px;color:#444;letter-spacing:0.3px">第 45 页，共 233 页</div>
<div class="t" style="left:140px;top:1021px;font-size:12px;line-height:12px;color:#444;letter-spacing:0.3px">22511 个字</div>
<svg style="position:absolute;left:221px;top:1019px;" width="16" height="15" viewBox="0 0 16 15"><path d="M1.5 1.5h6.5v10.5h-6.5z" fill="none" stroke="#555" stroke-width="1.1"/><path d="M8 1.5v12" stroke="#555" stroke-width="1.1"/><path d="M6.5 12.3l1.5 1.5 1.5-1.5" fill="none" stroke="#555"/><path d="M8 1.5h6.5M8 12h6.5" stroke="#555" stroke-width="1.1"/><path d="M10.5 4.5l4 4.5M14.5 4.5l-4 4.5" stroke="#555" stroke-width="1.3"/></svg>
<div class="t" style="left:254px;top:1021px;font-size:12px;line-height:12px;color:#444;">简体中文(中国大陆)</div>
<div class="t" style="left:376px;top:1021px;font-size:12px;line-height:12px;color:#444;">修订: 关闭</div>
<svg style="position:absolute;left:450px;top:1019px;" width="15" height="14" viewBox="0 0 15 14"><rect x="0.5" y="3.5" width="13" height="10" fill="none" stroke="#555"/><path d="M3 7h9M3 9.5h9M3 12h9" stroke="#555"/><rect x="0" y="0" width="5" height="5" fill="#555"/></svg>
<svg style="position:absolute;left:481px;top:1019px;" width="17" height="15" viewBox="0 0 17 15"><circle cx="7" cy="7" r="5.5" fill="none" stroke="#555" stroke-width="1.2" stroke-dasharray="6 2"/><path d="M9 9l6 6M15 9l-6 6" stroke="#333" stroke-width="1.5"/></svg>
<div class="t" style="left:500px;top:1021px;font-size:12px;line-height:12px;color:#333;font-weight:bold">辅助功能: 调查</div>
<svg style="position:absolute;left:1761px;top:1020px;" width="15" height="14" viewBox="0 0 15 14"><path d="M1 1.5h5.5l1 1 1-1H14v11H8.5l-1 1-1-1H1z" fill="none" stroke="#555"/><path d="M7.5 2.5v10M3 4.5h3M3 7h3M3 9.5h3M9 4.5h3M9 7h3M9 9.5h3" stroke="#555" stroke-width=".8"/></svg>
<div style="position:absolute;left:1789px;top:1016px;width:40px;height:22px;background:#C8C8C8"></div>
<svg style="position:absolute;left:1802px;top:1020px;" width="15" height="14" viewBox="0 0 15 14"><rect x="0.5" y="0.5" width="13" height="13" fill="none" stroke="#444"/><path d="M3 3.5h8M3 6h8M3 8.5h8M3 11h8" stroke="#444"/></svg>
<svg style="position:absolute;left:1841px;top:1019px;" width="16" height="15" viewBox="0 0 16 15"><path d="M0.5 0.5h11v9" fill="none" stroke="#555"/><path d="M0.5 .5v12h6" fill="none" stroke="#555"/><path d="M2.5 3h7M2.5 5.5h7M2.5 8h4" stroke="#555" stroke-width=".9"/><circle cx="11" cy="10.5" r="4" fill="#fff" stroke="#555"/><path d="M9 9c1 0 2 1 1.5 2.5M12 7.5c0 1 1 1.5 2 1.5" stroke="#555" stroke-width=".8" fill="none"/></svg>
<div class="t" style="left:1878px;top:1021px;font-size:12.5px;line-height:12.5px;color:#444;">130%</div>
<div style="position:absolute;left:541px;top:340px;width:1031px;height:675px;overflow:hidden">
<div style="position:absolute;left:155px;top:316px;width:0;height:0;transform:rotate(-0.34deg);transform-origin:0 0">
<div style="position:absolute;left:729px;top:-72px;width:2px;height:470px;background:#D8DBEA"></div>
<div class="t" style="left:192px;top:-63px;font-size:20px;line-height:20px;color:#1E1E1E;-webkit-text-stroke:0.1px;letter-spacing:0.1px;-webkit-text-stroke:0.35px">辽宁锦成化工耐火材料有限公司</div>
<div class="t" style="left:255px;top:-38px;font-size:20px;line-height:20px;color:#1E1E1E;-webkit-text-stroke:0.1px;-webkit-text-stroke:0.35px">原材料化验报告单</div>
<div style="position:absolute;left:0px;top:0px;width:669px;height:1.6px;background:#404040"></div>
<div style="position:absolute;left:0px;top:25px;width:669px;height:1.3px;background:#404040"></div>
<div style="position:absolute;left:0px;top:53px;width:669px;height:1.3px;background:#404040"></div>
<div style="position:absolute;left:0px;top:78px;width:670px;height:1.6px;background:#404040"></div>
<div style="position:absolute;left:0px;top:0px;width:1.6px;height:80px;background:#404040"></div>
<div style="position:absolute;left:668px;top:0px;width:1.6px;height:80px;background:#404040"></div>
<div style="position:absolute;left:333.5px;top:0px;width:1.4px;height:80px;background:#404040"></div>
<div class="t" style="left:3px;top:12px;font-size:14px;line-height:14px;color:#333;-webkit-text-stroke:0.1px;">产品名称：多聚甲醛</div>
<div class="t" style="left:337px;top:11px;font-size:14px;line-height:14px;color:#333;-webkit-text-stroke:0.1px;">采样日期：</div>
<div class="t" style="left:455px;top:9px;font-size:14px;line-height:14px;color:#333;-webkit-text-stroke:0.1px;">年</div>
<div class="t" style="left:504px;top:9px;font-size:14px;line-height:14px;color:#333;-webkit-text-stroke:0.1px;">月</div>
<div class="t" style="left:550px;top:9px;font-size:14px;line-height:14px;color:#333;-webkit-text-stroke:0.1px;">日</div>
<div class="t" style="left:3px;top:39px;font-size:14px;line-height:14px;color:#333;-webkit-text-stroke:0.1px;font-family:&quot;Liberation Serif&quot;,serif">执行标准：Q/HY02-2021</div>
<div class="t" style="left:337px;top:37px;font-size:14px;line-height:14px;color:#333;-webkit-text-stroke:0.1px;">检验日期：</div>
<div class="t" style="left:455px;top:36px;font-size:14px;line-height:14px;color:#333;-webkit-text-stroke:0.1px;">年</div>
<div class="t" style="left:504px;top:36px;font-size:14px;line-height:14px;color:#333;-webkit-text-stroke:0.1px;">月</div>
<div class="t" style="left:550px;top:36px;font-size:14px;line-height:14px;color:#333;-webkit-text-stroke:0.1px;">日</div>
<div class="t" style="left:3px;top:64px;font-size:14px;line-height:14px;color:#333;-webkit-text-stroke:0.1px;">来料数量（吨）：</div>
<div class="t" style="left:337px;top:63px;font-size:14px;line-height:14px;color:#333;-webkit-text-stroke:0.1px;">生产单位：宁夏华业精细化学科技有限公司</div>
<div class="t" style="left:192px;top:270px;font-size:20px;line-height:20px;color:#1E1E1E;-webkit-text-stroke:0.1px;letter-spacing:0.1px;-webkit-text-stroke:0.35px">辽宁锦成化工耐火材料有限公司</div>
<div class="t" style="left:255px;top:295px;font-size:20px;line-height:20px;color:#1E1E1E;-webkit-text-stroke:0.1px;-webkit-text-stroke:0.35px">原材料化验报告单</div>
<div style="position:absolute;left:0px;top:333px;width:669px;height:1.6px;background:#404040"></div>
<div style="position:absolute;left:0px;top:358px;width:669px;height:1.3px;background:#404040"></div>
<div style="position:absolute;left:0px;top:386px;width:669px;height:1.3px;background:#404040"></div>
<div style="position:absolute;left:0px;top:411px;width:670px;height:1.6px;background:#404040"></div>
<div style="position:absolute;left:0px;top:333px;width:1.6px;height:80px;background:#404040"></div>
<div style="position:absolute;left:668px;top:333px;width:1.6px;height:80px;background:#404040"></div>
<div style="position:absolute;left:333.5px;top:333px;width:1.4px;height:80px;background:#404040"></div>
<div class="t" style="left:3px;top:345px;font-size:14px;line-height:14px;color:#333;-webkit-text-stroke:0.1px;">产品名称：多聚甲醛</div>
<div class="t" style="left:337px;top:344px;font-size:14px;line-height:14px;color:#333;-webkit-text-stroke:0.1px;">采样日期：</div>
<div class="t" style="left:455px;top:342px;font-size:14px;line-height:14px;color:#333;-webkit-text-stroke:0.1px;">年</div>
<div class="t" style="left:504px;top:342px;font-size:14px;line-height:14px;color:#333;-webkit-text-stroke:0.1px;">月</div>
<div class="t" style="left:550px;top:342px;font-size:14px;line-height:14px;color:#333;-webkit-text-stroke:0.1px;">日</div>
<svg style="position:absolute;left:158px;top:58px" width="26" height="18" viewBox="0 0 26 18"><path d="M2 3c3-2 6 0 3 4 3 0 3 5-2 6M9 3c3-2 6 0 3 4 3 0 3 5-2 6M15 13l1 0M18 4c3-2 6 0 3 4 3 0 3 5-2 6" fill="none" stroke="#111" stroke-width="1.6" stroke-linecap="round" stroke-linejoin="round"/></svg>
<svg style="position:absolute;left:421px;top:11px" width="30" height="14" viewBox="0 0 30 14"><path d="M2 6c2-3 5-2 3 1-1 2-3 4-4 6 2-1 4-1 5-1M9 9c1-2 3-1 2 1-1 2-3 1-2-1M14 5c2-3 5-2 3 1l-4 7c2-1 3-1 4-1M22 4l-2 6c3-2 5 0 3 3-1 1-3 1-4 0M21 3.5c2 0 4-1 6-1" fill="none" stroke="#111" stroke-width="1.5" stroke-linecap="round" stroke-linejoin="round"/></svg>
<svg style="position:absolute;left:484px;top:11px" width="10" height="16" viewBox="0 0 10 16"><path d="M3 2l-1 13M8 2l-1 13" fill="none" stroke="#111" stroke-width="1.4" stroke-linecap="round" stroke-linejoin="round"/></svg>
<svg style="position:absolute;left:527px;top:11px" width="12" height="18" viewBox="0 0 12 18"><path d="M1 3h9l-4 14" fill="none" stroke="#111" stroke-width="1.6" stroke-linecap="round" stroke-linejoin="round"/></svg>
<svg style="position:absolute;left:421px;top:344px" width="30" height="14" viewBox="0 0 30 14"><path d="M2 6c2-3 5-2 3 1-1 2-3 4-4 6 2-1 4-1 5-1M9 9c1-2 3-1 2 1-1 2-3 1-2-1M14 5c2-3 5-2 3 1l-4 7c2-1 3-1 4-1M22 4l-2 6c3-2 5 0 3 3-1 1-3 1-4 0M21 3.5c2 0 4-1 6-1" fill="none" stroke="#111" stroke-width="1.5" stroke-linecap="round" stroke-linejoin="round"/></svg>
<svg style="position:absolute;left:484px;top:344px" width="10" height="16" viewBox="0 0 10 16"><path d="M3 2l-1 13M8 2l-1 13" fill="none" stroke="#111" stroke-width="1.4" stroke-linecap="round" stroke-linejoin="round"/></svg>
<svg style="position:absolute;left:527px;top:344px" width="12" height="18" viewBox="0 0 12 18"><path d="M1 3h9l-4 14" fill="none" stroke="#111" stroke-width="1.6" stroke-linecap="round" stroke-linejoin="round"/></svg>
<svg style="position:absolute;left:423px;top:38px" width="30" height="14" viewBox="0 0 30 14"><path d="M2 6c2-3 5-2 3 1-1 2-3 4-4 6 2-1 4-1 5-1M9 9c1-2 3-1 2 1-1 2-3 1-2-1M14 5c2-3 5-2 3 1l-4 7c2-1 3-1 4-1M22 4l-2 6c3-2 5 0 3 3-1 1-3 1-4 0M21 3.5c2 0 4-1 6-1" fill="none" stroke="#111" stroke-width="1.5" stroke-linecap="round" stroke-linejoin="round"/></svg>
<svg style="position:absolute;left:485px;top:38px" width="10" height="16" viewBox="0 0 10 16"><path d="M3 2l-1 13M8 2l-1 13" fill="none" stroke="#111" stroke-width="1.4" stroke-linecap="round" stroke-linejoin="round"/></svg>
<svg style="position:absolute;left:527px;top:38px" width="12" height="24" viewBox="0 0 12 24"><path d="M1 3h9l-4 20" fill="none" stroke="#111" stroke-width="1.6" stroke-linecap="round" stroke-linejoin="round"/></svg>
<div style="position:absolute;left:0px;top:96.7px;width:669px;height:1.6px;background:#404040"></div>
<div style="position:absolute;left:0px;top:121.7px;width:669px;height:1.3px;background:#404040"></div>
<div style="position:absolute;left:0px;top:146.7px;width:669px;height:1.3px;background:#404040"></div>
<div style="position:absolute;left:0px;top:172.7px;width:669px;height:1.3px;background:#404040"></div>
<div style="position:absolute;left:0px;top:223.2px;width:334.5px;height:1.3px;background:#404040"></div>
<div style="position:absolute;left:167.6px;top:196.7px;width:167px;height:1.2px;background:#404040"></div>
<div style="position:absolute;left:0px;top:248.2px;width:670px;height:1.6px;background:#404040"></div>
<div style="position:absolute;left:0px;top:96.7px;width:1.6px;height:153px;background:#404040"></div>
<div style="position:absolute;left:668px;top:96.7px;width:1.6px;height:153px;background:#404040"></div>
<div style="position:absolute;left:167px;top:96.7px;width:1.3px;height:128px;background:#404040"></div>
<div style="position:absolute;left:333.5px;top:96.7px;width:1.3px;height:153px;background:#404040"></div>
<div style="position:absolute;left:501.5px;top:96.7px;width:1.3px;height:77px;background:#404040"></div>
<div class="t" style="left:-66px;width:300px;text-align:center;top:107.7px;font-size:14px;line-height:14px;color:#333;-webkit-text-stroke:0.1px;">检验项目</div>
<div class="t" style="left:101px;width:300px;text-align:center;top:107.7px;font-size:14px;line-height:14px;color:#333;-webkit-text-stroke:0.1px;">质量标准</div>
<div class="t" style="left:269px;width:300px;text-align:center;top:107.7px;font-size:14px;line-height:14px;color:#333;-webkit-text-stroke:0.1px;">检测结果</div>
<div class="t" style="left:436px;width:300px;text-align:center;top:107.7px;font-size:14px;line-height:14px;color:#333;-webkit-text-stroke:0.1px;">试验方法</div>
<div class="t" style="left:-66px;width:300px;text-align:center;top:132.7px;font-size:14px;line-height:14px;color:#333;-webkit-text-stroke:0.1px;">外观</div>
<div class="t" style="left:101px;width:300px;text-align:center;top:132.7px;font-size:14px;line-height:14px;color:#333;-webkit-text-stroke:0.1px;">白色粉末固体</div>
<div class="t" style="left:-66px;width:300px;text-align:center;top:158.7px;font-size:14px;line-height:14px;color:#333;-webkit-text-stroke:0.1px;">甲醛含量</div>
<div class="t" style="left:101px;width:300px;text-align:center;top:156.7px;font-size:13.5px;line-height:13.5px;color:#222;-webkit-text-stroke:0.1px;">≥96%</div>
<div class="t" style="left:436px;width:300px;text-align:center;top:156.7px;font-size:13.5px;line-height:13.5px;color:#222;-webkit-text-stroke:0.1px;">Q/HY02-2021</div>
<div class="t" style="left:-69px;width:300px;text-align:center;top:183.7px;font-size:14px;line-height:14px;color:#333;-webkit-text-stroke:0.1px;">判定结论：</div>
<div class="t" style="left:171px;top:183.7px;font-size:14px;line-height:14px;color:#333;-webkit-text-stroke:0.1px;">检验人：</div>
<div class="t" style="left:171px;top:208.7px;font-size:14px;line-height:14px;color:#333;-webkit-text-stroke:0.1px;">复核人：</div>
<div class="t" style="left:5px;top:234.7px;font-size:14px;line-height:14px;color:#333;-webkit-text-stroke:0.1px;">备注：</div>
<div class="t" style="left:353px;width:300px;text-align:center;top:209.7px;font-size:14px;line-height:14px;color:#333;-webkit-text-stroke:0.1px;">盖章</div>
<svg style="position:absolute;left:404px;top:121.7px" width="30" height="26" viewBox="0 0 30 26"><path d="M7 1L2.5 12M7 1l4 7M4 10.5h6M5 13l-2 6 6-3M2 22l6-3M15 9h6M17.5 4v20M17.5 12l-3 7M21 10l5-4 1.5 3-6 4M20.5 18c2-2 6-2 6.5 0l-2 5-4-1z" fill="none" stroke="#111" stroke-width="1.7" stroke-linecap="round" transform="translate(2 0) skewX(-8) scale(1 0.9)"/></svg>
<svg style="position:absolute;left:412px;top:152.7px" width="34" height="20" viewBox="0 0 34 20"><path d="M9 3c-3-1-6 1-4 4 2 2 3 0 3-2L3 17M11 10c-2 2-3 6 0 6 3-1 2-5-1-4M17 15l1 0M27 3c-4 1-6 8-3 11 3 2 4-3 1-3M28 12l3 3 3-2" fill="none" stroke="#111" stroke-width="1.5" stroke-linecap="round" stroke-linejoin="round"/></svg>
<svg style="position:absolute;left:66px;top:196.7px" width="30" height="28" viewBox="0 0 30 28"><path d="M7 1L2.5 12M7 1l4 7M4 10.5h6M5 13l-2 6 6-3M2 22l6-3M15 9h6M17.5 4v20M17.5 12l-3 7M21 10l5-4 1.5 3-6 4M20.5 18c2-2 6-2 6.5 0l-2 5-4-1z" fill="none" stroke="#111" stroke-width="1.7" stroke-linecap="round" transform="translate(3 0) skewX(-8)"/></svg>
<svg style="position:absolute;left:237px;top:178.7px" width="52" height="24" viewBox="0 0 52 24"><path d="M3 3v18M3 4c4 0 5 3 1 6 4 1 3 6-1 5M12 5l-3 6 9 0M13 3l5 9M11 14l8 3M26 5l3 2M24 10h8M28 8v14M23 15h10M22 22h12M40 6h9M44 6l-3 13h9M40 12h6" fill="none" stroke="#111" stroke-width="1.6" stroke-linecap="round" stroke-linejoin="round"/></svg>
<svg style="position:absolute;left:234px;top:202.7px" width="50" height="20" viewBox="0 0 50 20"><path d="M3 4l8 0M7 2l-1 7M5 9l6 1M8 10c-2 4-5 7-7 9M6 13c3 3 8 5 14 5M31 4v14M27 8h8M29 12l-3 6M36 4l1 13M36 5h6v12l4 1" fill="none" stroke="#111" stroke-width="1.6" stroke-linecap="round" stroke-linejoin="round"/></svg>
<svg style="position:absolute;left:432px;top:119px" width="142" height="142" viewBox="0 0 142 142"><circle cx="71" cy="71" r="65.5" fill="none" stroke="#E07898" stroke-width="2.6" opacity="0.85"/><g opacity="0.85"><text transform="translate(29.88 93.76) rotate(241.0) scale(0.78 1)" text-anchor="middle" font-size="17" fill="#E58AA8" font-family="Liberation Sans">辽</text><text transform="translate(25.18 81.49) rotate(257.1) scale(0.78 1)" text-anchor="middle" font-size="17" fill="#E58AA8" font-family="Liberation Sans">宁</text><text transform="translate(24.07 68.39) rotate(273.2) scale(0.78 1)" text-anchor="middle" font-size="17" fill="#E58AA8" font-family="Liberation Sans">锦</text><text transform="translate(26.63 55.50) rotate(289.2) scale(0.78 1)" text-anchor="middle" font-size="17" fill="#E58AA8" font-family="Liberation Sans">成</text><text transform="translate(32.65 43.83) rotate(305.3) scale(0.78 1)" text-anchor="middle" font-size="17" fill="#E58AA8" font-family="Liberation Sans">化</text><text transform="translate(41.67 34.27) rotate(321.4) scale(0.78 1)" text-anchor="middle" font-size="17" fill="#E58AA8" font-family="Liberation Sans">工</text><text transform="translate(52.99 27.59) rotate(337.5) scale(0.78 1)" text-anchor="middle" font-size="17" fill="#E58AA8" font-family="Liberation Sans">耐</text><text transform="translate(65.71 24.30) rotate(353.5) scale(0.78 1)" text-anchor="middle" font-size="17" fill="#E58AA8" font-family="Liberation Sans">火</text><text transform="translate(78.84 24.66) rotate(369.6) scale(0.78 1)" text-anchor="middle" font-size="17" fill="#E58AA8" font-family="Liberation Sans">材</text><text transform="translate(91.37 28.64) rotate(385.7) scale(0.78 1)" text-anchor="middle" font-size="17" fill="#E58AA8" font-family="Liberation Sans">料</text><text transform="translate(102.30 35.94) rotate(401.8) scale(0.78 1)" text-anchor="middle" font-size="17" fill="#E58AA8" font-family="Liberation Sans">有</text><text transform="translate(110.78 45.97) rotate(417.8) scale(0.78 1)" text-anchor="middle" font-size="17" fill="#E58AA8" font-family="Liberation Sans">限</text><text transform="translate(116.15 57.96) rotate(433.9) scale(0.78 1)" text-anchor="middle" font-size="17" fill="#E58AA8" font-family="Liberation Sans">公</text><text transform="translate(118.00 70.97) rotate(450.0) scale(0.78 1)" text-anchor="middle" font-size="17" fill="#E58AA8" font-family="Liberation Sans">司</text></g><text transform="translate(71 118) rotate(-14) scale(0.8 1)" text-anchor="middle" font-size="17" fill="#E58AA8" font-family="Liberation Sans" opacity="0.85">化验专用</text></svg>
</div></div>
</body></html>
